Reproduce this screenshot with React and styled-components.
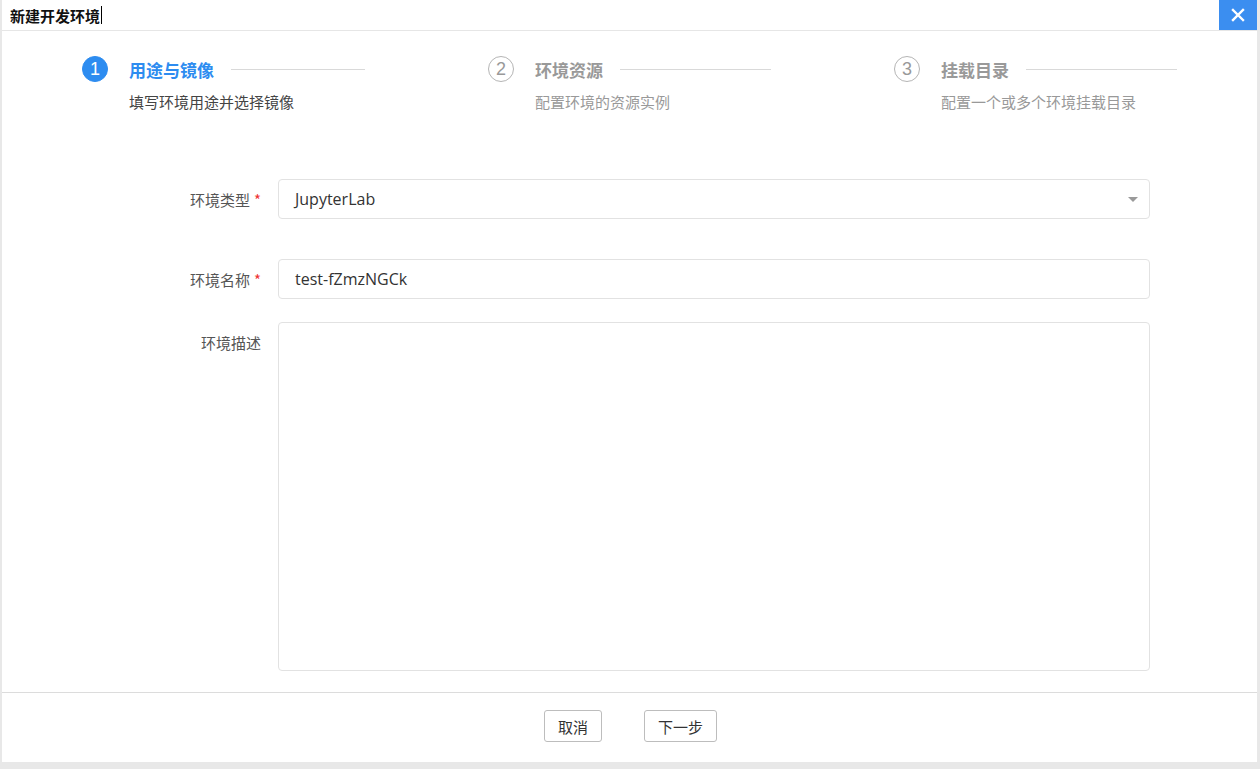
import styled, { createGlobalStyle } from "styled-components";

const GlobalStyle = createGlobalStyle`
  html, body {
    margin: 0;
    padding: 0;
    background: #e8e8e8;
    font-family: "Noto Sans CJK SC", "Noto Sans", sans-serif;
  }
`;

const Dialog = styled.div`
  width: 1255px;
  height: 762px;
  margin-left: 2px;
  background: #fff;
  display: flex;
  flex-direction: column;
  overflow: hidden;
`;

const Header = styled.div`
  height: 30px;
  border-bottom: 1px solid #e6e6e6;
  display: flex;
  align-items: center;
  justify-content: space-between;
  flex-shrink: 0;
`;

const Title = styled.div`
  padding-left: 8px;
  font-size: 15px;
  font-weight: 700;
  color: #111;
  display: flex;
  align-items: center;
`;

const Caret = styled.span`
  display: inline-block;
  width: 1px;
  height: 18px;
  background: #000;
  margin-left: 1px;
`;

const CloseBtn = styled.button`
  width: 38px;
  height: 30px;
  border: none;
  padding: 0;
  margin: 0;
  background: #3b8ef0;
  display: flex;
  align-items: center;
  justify-content: center;
  cursor: pointer;
  align-self: flex-start;
`;

const Steps = styled.div`
  display: flex;
  gap: 123px;
  padding: 25px 0 0 80px;
  flex-shrink: 0;
`;

const Step = styled.div`
  width: 283px;
  display: flex;
  align-items: flex-start;
`;

const StepIcon = styled.div`
  width: 26px;
  height: 26px;
  box-sizing: border-box;
  border-radius: 50%;
  flex-shrink: 0;
  display: flex;
  align-items: center;
  justify-content: center;
  font-family: "Liberation Sans", sans-serif;
  font-size: 18px;
  background: ${(p) => (p.$active ? "#2d8cf0" : "#fff")};
  color: ${(p) => (p.$active ? "#fff" : "#999")};
  border: 1px solid ${(p) => (p.$active ? "#2d8cf0" : "#b5b5b5")};
`;

const StepBody = styled.div`
  flex: 1;
  margin-left: 21px;
`;

const StepHead = styled.div`
  display: flex;
  align-items: center;
  height: 26px;
`;

const StepTitle = styled.div`
  font-size: 17px;
  font-weight: 700;
  color: ${(p) => (p.$active ? "#2d8cf0" : "#999")};
  white-space: nowrap;
`;

const StepLine = styled.div`
  flex: 1;
  height: 1px;
  background: #d9d9d9;
  margin-left: 17px;
`;

const StepDesc = styled.div`
  margin-top: 9px;
  font-size: 15px;
  color: ${(p) => (p.$active ? "#444" : "#999")};
  white-space: nowrap;
`;

const Form = styled.div`
  flex: 1;
  display: flex;
  flex-direction: column;
  padding: 67px 0 0 0;
`;

const Row = styled.div`
  display: flex;
  align-items: ${(p) => (p.$top ? "flex-start" : "center")};
  margin-bottom: ${(p) => p.$mb || 0}px;
`;

const Label = styled.div`
  width: 276px;
  padding-right: 17px;
  box-sizing: border-box;
  text-align: right;
  font-size: 15px;
  color: #555;
  padding-top: ${(p) => (p.$top ? 10 : 0)}px;
  white-space: nowrap;
`;

const Star = styled.span`
  color: #e33;
  margin-left: 4px;
`;

const Field = styled.div`
  width: 872px;
  height: ${(p) => p.$h || 40}px;
  box-sizing: border-box;
  border: 1px solid #e2e2e2;
  border-radius: 4px;
  display: flex;
  align-items: center;
  justify-content: space-between;
  padding: 0 11px 0 16px;
  font-family: "Open Sans", "Noto Sans", sans-serif;
  font-size: 16px;
  color: #333;
  background: #fff;
`;

const Arrow = styled.span`
  width: 0;
  height: 0;
  border-left: 5px solid transparent;
  border-right: 5px solid transparent;
  border-top: 5px solid #9a9a9a;
`;

const Footer = styled.div`
  height: 70px;
  border-top: 1px solid #dcdcdc;
  display: flex;
  justify-content: center;
  align-items: flex-start;
  gap: 42px;
  padding-top: 17px;
  box-sizing: border-box;
  flex-shrink: 0;
  padding-left: 2px;
`;

const Btn = styled.button`
  height: 32px;
  padding: 0 ${(p) => p.$px || 14}px;
  background: #fff;
  border: 1px solid #bdbdbd;
  border-radius: 3px;
  font-family: "Noto Sans CJK SC", sans-serif;
  font-size: 15px;
  color: #333;
  cursor: pointer;
`;

const steps = [
  { n: 1, title: "用途与镜像", desc: "填写环境用途并选择镜像", active: true },
  { n: 2, title: "环境资源", desc: "配置环境的资源实例" },
  { n: 3, title: "挂载目录", desc: "配置一个或多个环境挂载目录" },
];

export default function App() {
  return (
    <>
      <GlobalStyle />
      <Dialog>
        <Header>
          <Title>
            新建开发环境
            <Caret />
          </Title>
          <CloseBtn>
            <svg width="14" height="14" viewBox="0 0 14 14">
              <path d="M2 2L12 12M12 2L2 12" stroke="#fff" strokeWidth="2.4" strokeLinecap="square" />
            </svg>
          </CloseBtn>
        </Header>
        <Steps>
          {steps.map((s) => (
            <Step key={s.n}>
              <StepIcon $active={s.active}>{s.n}</StepIcon>
              <StepBody>
                <StepHead>
                  <StepTitle $active={s.active}>{s.title}</StepTitle>
                  <StepLine />
                </StepHead>
                <StepDesc $active={s.active}>{s.desc}</StepDesc>
              </StepBody>
            </Step>
          ))}
        </Steps>
        <Form>
          <Row $mb={40}>
            <Label>
              环境类型<Star>*</Star>
            </Label>
            <Field>
              JupyterLab
              <Arrow />
            </Field>
          </Row>
          <Row $mb={23}>
            <Label>
              环境名称<Star>*</Star>
            </Label>
            <Field>test-fZmzNGCk</Field>
          </Row>
          <Row $top>
            <Label $top>环境描述</Label>
            <Field $h={349} />
          </Row>
        </Form>
        <Footer>
          <Btn $px={13}>取消</Btn>
          <Btn $px={13}>下一步</Btn>
        </Footer>
      </Dialog>
    </>
  );
}
